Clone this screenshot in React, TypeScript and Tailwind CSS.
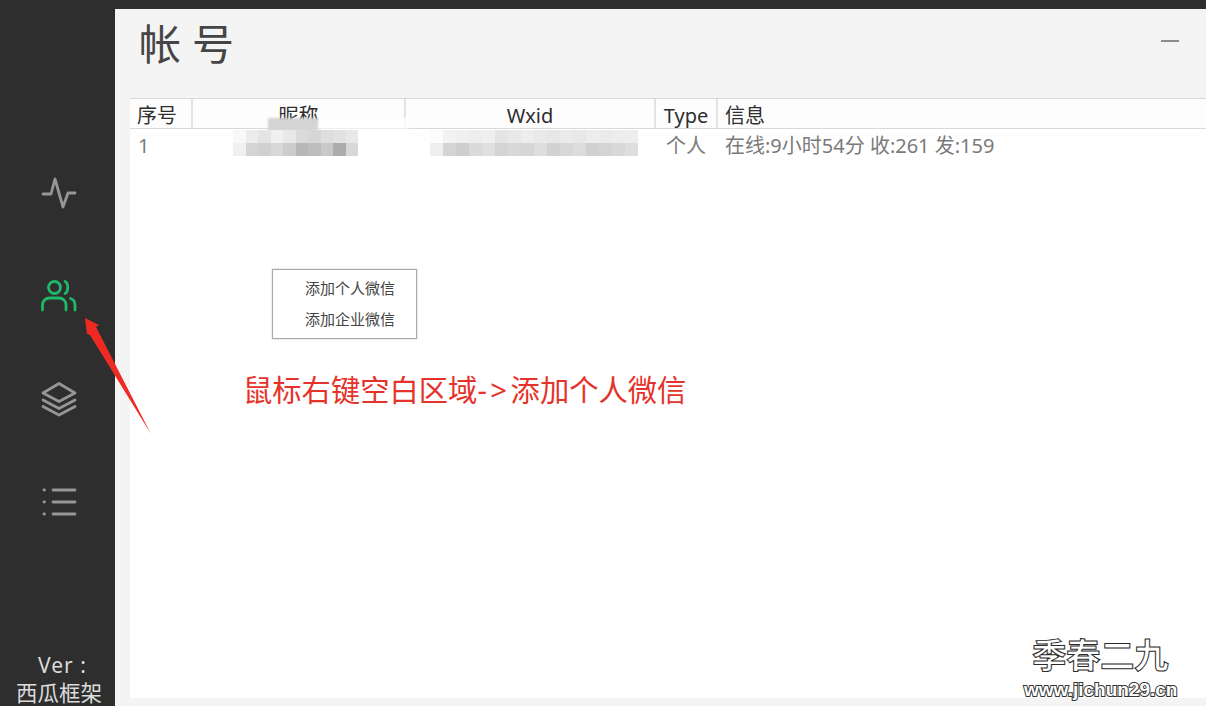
const font = '"Noto Sans", "Noto Sans CJK SC", sans-serif';

const nick = [
  ["#f8f8f8","#ececec","#e4e4e4","#f0f0f0","#e8e8e8","#dadada","#d6d6d6","#dedede","#e2e2e2","#e8e8e8"],
  ["#f0f0f0","#d4d4d4","#d0d0d0","#d8d8d8","#cccccc","#b8b8b8","#bebebe","#c8c8c8","#acacac","#d8d8d8"],
];
const wxid = [
  ["#fcfcfc","#f2f2f2","#f0f0f0","#ededed","#efefef","#e4e4e4","#e8e8e8","#ededed","#e9e9e9","#e7e7e7","#ebebeb","#e8e8e8","#ededed","#ebebeb","#ededed","#eeeeee"],
  ["#eeeeee","#d4d4d4","#cecece","#dadada","#e0e0e0","#d4d4d4","#d8d8d8","#d6d6d6","#dedede","#d2d2d2","#d8d8d8","#dcdcdc","#d0d0d0","#d4d4d4","#d8d8d8","#dedede"],
];

function Mosaic({ data, cell, className }: { data: string[][]; cell: number; className: string }) {
  return (
    <div className={`absolute flex flex-col blur-[0.6px] ${className}`}>
      {data.map((row, i) => (
        <div key={i} className="flex h-[13px]">
          {row.map((c, j) => (
            <div key={j} style={{ width: cell, background: c }} />
          ))}
        </div>
      ))}
    </div>
  );
}

const iconCls = "w-[36px] h-[36px] fill-none stroke-[2.800]";

function NavItem({ children }: { children: React.ReactNode }) {
  return <div className="h-[103px] flex items-center justify-center pl-[3px]">{children}</div>;
}

export default function App() {
  return (
    <div className="relative w-[1206px] h-[706px] overflow-hidden flex flex-col bg-[#2e2e2e]" style={{ fontFamily: font }}>
      <div className="h-[9px] shrink-0 bg-[#2e2e2e]" />
      <div className="flex-1 flex min-h-0">
        <aside className="w-[115px] shrink-0 flex flex-col bg-[#2e2e2e] pt-[132px]">
          <NavItem>
            <svg viewBox="0 0 36 36" className={`${iconCls} stroke-[#969696]`} strokeLinecap="round" strokeLinejoin="round">
              <path d="M2 19h8l4-15 8 28 5-14h7" />
            </svg>
          </NavItem>
          <NavItem>
            <svg viewBox="0 0 36 36" className={`${iconCls} stroke-[#1fb868]`} strokeLinecap="round" strokeLinejoin="round">
              <circle cx="13.500" cy="9.500" r="6" />
              <path d="M24 3.500c3.600 1.400 3.600 10.400 0 12" />
              <path d="M1.500 32v-5c0-4 3-7 7-7h9.500c4 0 7 3 7 7v5" />
              <path d="M29.500 20.500c2.500.8 4.500 3.200 4.500 6.500v5" />
            </svg>
          </NavItem>
          <NavItem>
            <svg viewBox="0 0 36 36" className={`${iconCls} stroke-[#969696]`} strokeLinecap="round" strokeLinejoin="round">
              <path d="M18 2.500 34 12 18 20.500 2 12Z" />
              <path d="M2 19l16 8.500L34 19" />
              <path d="M2 25.500 18 34l16-8.500" />
            </svg>
          </NavItem>
          <NavItem>
            <svg viewBox="0 0 36 36" className={`${iconCls} stroke-[#969696]`} strokeLinecap="round" strokeLinejoin="round">
              <path d="M12 6h22M12 18h22M12 30h22" />
              <path d="M3 6h.5M3 18h.5M3 30h.5" />
            </svg>
          </NavItem>
          <div className="mt-auto text-center text-[#dcdcdc]">
            <div className="text-[21px] leading-[30px] tracking-[1px] pl-[10px] whitespace-pre -mt-[1px]">Ver :</div>
            <div className="text-[21.500px] leading-[26px] whitespace-nowrap pl-[3px]">西瓜框架</div>
          </div>
        </aside>

        <main className="flex-1 min-w-0 bg-[#f4f4f4] flex flex-col pl-[15px] pb-[8px] border-t border-[#f8f8f8]">
          <header className="h-[88px] shrink-0 flex items-start justify-between">
            <h1 className="text-[42px] leading-[70px] ml-[9px] mt-[-1px] font-normal text-[#454545] whitespace-pre">帐 号</h1>
            <div className="w-[18px] h-[2px] bg-[#8c8c8c] mt-[30px] mr-[27px]" />
          </header>
          <section className="flex-1 bg-white min-h-0">
            <div className="grid grid-cols-[63px_213px_250px_62px_1fr] grid-rows-[29px] h-[31px] border-t border-b border-[#d9d9d9] bg-[#fdfdfd] text-[20px] leading-[29px] text-[#2e2e2e] [&>div]:pt-[2px]">
              <div className="pl-[7px] border-r-2 border-[#e3e3e3]">序号</div>
              <div className="text-center border-r-2 border-[#e3e3e3]">昵称</div>
              <div className="text-center border-r-2 border-[#e3e3e3]">Wxid</div>
              <div className="text-center border-r-2 border-[#e3e3e3]">Type</div>
              <div className="pl-[7px]">信息</div>
            </div>
            <div className="grid grid-cols-[63px_213px_250px_62px_1fr] text-[20px] leading-[34px] text-[#7a7a7a]">
              <div className="pl-[8px]">1</div>
              <div />
              <div />
              <div className="text-center pr-[2px]">个人</div>
              <div className="pl-[7px] whitespace-nowrap">在线:9小时54分 收:261 发:159</div>
            </div>
          </section>
        </main>
      </div>

      <div className="absolute left-[318px] top-[118px] w-[90px] h-[11px] bg-white/80 blur-[1px]" />
      <div className="absolute left-[268px] top-[118px] w-[50px] h-[13px] bg-[#d4d4d4] blur-[1px]" />
      <Mosaic data={nick} cell={12.500} className="left-[233px] top-[130px]" />
      <Mosaic data={wxid} cell={13} className="left-[430px] top-[130px]" />

      <div className="absolute left-[272px] top-[269px] w-[145px] h-[70px] bg-white border border-[#a8a8a8] pl-[32px] pt-[3px] text-[15px] leading-[31px] text-[#444444] shadow-[0_0_2px_rgba(0,0,0,0.2)]">
        <div>添加个人微信</div>
        <div>添加企业微信</div>
      </div>

      <div className="absolute left-[243px] top-[369px] text-[29.300px] leading-[42px] text-[#e5332b] whitespace-nowrap">
        鼠标右键空白区域<span className="tracking-[3.500px]">-&gt;</span>添加个人微信
      </div>

      <svg className="absolute left-0 top-0 w-[1206px] h-[706px] pointer-events-none" viewBox="0 0 1206 706">
        <polygon points="85,318 99,325 96,327 151,434 90,335 87,334" fill="#ee2a22" />
      </svg>

      <div className="absolute left-[1032px] top-[629px] text-[34.500px] leading-[52px] tracking-[-0.500px] text-white whitespace-nowrap font-bold [-webkit-text-stroke:1px_#2a2a2a]">
        季春二九
      </div>
      <div className="absolute left-[1024px] top-[679px] text-[19px] leading-[21px] font-bold text-white whitespace-nowrap [-webkit-text-stroke:2px_#333333] [paint-order:stroke_fill]" style={{ fontFamily: '"Liberation Sans", sans-serif' }}>
        www.jichun29.cn
      </div>
    </div>
  );
}
